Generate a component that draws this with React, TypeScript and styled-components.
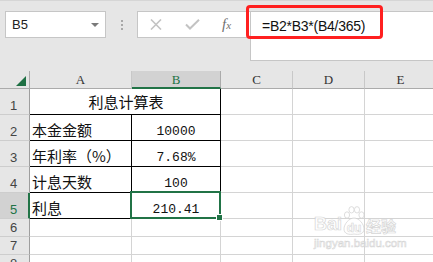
import React from 'react';
import styled, { createGlobalStyle } from 'styled-components';

const GREEN = '#217346';

const Global = createGlobalStyle`
  html, body { margin: 0; padding: 0; }
  body {
    width: 433px;
    height: 262px;
    overflow: hidden;
    background: #e6e6e6;
    font-family: "Liberation Sans", "Noto Sans CJK SC", sans-serif;
  }
`;

const Page = styled.div`
  position: relative;
  width: 433px;
  height: 262px;
  overflow: hidden;
  background: #e6e6e6;
`;

const TopBar = styled.div`
  box-sizing: border-box;
  height: 71px;
  border-top: 1px solid #d6d6d6;
  padding: 10px 0 0 5px;
  display: flex;
  align-items: flex-start;
`;

const NameBox = styled.div`
  box-sizing: border-box;
  width: 101px;
  height: 27px;
  background: #fff;
  border: 1px solid #c6c6c6;
  display: flex;
  align-items: center;
  justify-content: space-between;
  padding: 0 6px 0 6px;
  font-size: 13px;
  color: #222;
`;

const Arrow = styled.span`
  width: 0;
  height: 0;
  border-left: 4px solid transparent;
  border-right: 4px solid transparent;
  border-top: 4px solid #7a7a7a;
  margin-top: 1px;
`;

const Sep = styled.div`
  width: 31px;
  display: flex;
  flex-direction: column;
  align-items: center;
  gap: 2px;
  padding-top: 9px;
`;

const Dot = styled.span`
  width: 2px;
  height: 2px;
  background: #a8a8a8;
`;

const FormulaArea = styled.div`
  flex: 1;
  display: flex;
  align-items: flex-start;
`;

const ButtonsBox = styled.div`
  box-sizing: border-box;
  width: 113px;
  height: 27px;
  background: #fff;
  border: 1px solid #c6c6c6;
  border-right: none;
  display: flex;
  align-items: center;
  padding-left: 12px;
`;

const IconSlot = styled.span<{ $ml: number }>`
  display: flex;
  align-items: center;
  margin-left: ${(p) => p.$ml}px;
`;

const Fx = styled.span`
  font-family: "Liberation Serif", serif;
  font-style: italic;
  font-size: 15px;
  color: #707070;
  line-height: 1;
  margin-top: -1px;
  & > small {
    font-size: 11px;
  }
`;

const FormulaInput = styled.div`
  box-sizing: border-box;
  flex: 1;
  height: 50px;
  background: #fff;
  border: 1px solid #c6c6c6;
  margin-right: -2px;
  padding: 6px 0 0 11px;
  font-size: 14px;
  line-height: 16px;
  letter-spacing: -0.25px;
  color: #111;
`;

const RedBox = styled.div`
  position: absolute;
  left: 246px;
  top: 5px;
  width: 137px;
  height: 34px;
  box-sizing: border-box;
  border: 3px solid #ff2020;
  border-radius: 4px;
`;

const Sheet = styled.div`
  display: grid;
  grid-template-columns: 30px 102px 89px 72px 72px 72px;
  grid-template-rows: 18px 26px 26px 26px 26px 26px 18px 18px 18px;
`;

const Corner = styled.div`
  box-sizing: border-box;
  border-right: 1px solid #ababab;
  border-bottom: 1px solid #ababab;
  display: flex;
  justify-content: flex-end;
  align-items: flex-end;
  padding: 0 3px 2px 0;
`;

const ColHeader = styled.div<{ $sel?: boolean }>`
  box-sizing: border-box;
  background: ${(p) => (p.$sel ? '#d2d2d2' : '#e6e6e6')};
  border-right: 1px solid ${(p) => (p.$sel ? '#ababab' : '#c8c8c8')};
  border-bottom: ${(p) => (p.$sel ? `2px solid ${GREEN}` : '1px solid #ababab')};
  display: flex;
  justify-content: center;
  align-items: flex-end;
  padding-bottom: ${(p) => (p.$sel ? 1 : 2)}px;
  font-family: "Liberation Serif", serif;
  font-size: 13px;
  line-height: 12px;
  color: ${(p) => (p.$sel ? GREEN : '#333')};
`;

const RowHeader = styled.div<{ $sel?: boolean }>`
  box-sizing: border-box;
  background: ${(p) => (p.$sel ? '#d2d2d2' : '#e6e6e6')};
  border-right: ${(p) => (p.$sel ? `2px solid ${GREEN}` : '1px solid #9e9e9e')};
  border-bottom: 1px solid #cdcdcd;
  display: flex;
  justify-content: center;
  align-items: flex-end;
  padding: 0 ${(p) => (p.$sel ? 1 : 2)}px 2px 0;
  font-size: 13px;
  line-height: 13px;
  color: ${(p) => (p.$sel ? GREEN : '#444')};
`;

const Cell = styled.div<{ $table?: boolean; $span?: number; $align?: 'left' | 'center'; $v?: 'center' | 'bottom' }>`
  position: relative;
  box-sizing: border-box;
  background: #fff;
  grid-column: span ${(p) => p.$span ?? 1};
  border-right: 1px solid ${(p) => (p.$table ? '#000' : '#d4d4d4')};
  border-bottom: 1px solid ${(p) => (p.$table ? '#000' : '#d4d4d4')};
  display: flex;
  justify-content: ${(p) => (p.$align === 'center' ? 'center' : 'flex-start')};
  align-items: ${(p) => (p.$v === 'center' ? 'center' : 'flex-end')};
  padding: 0 0 ${(p) => (p.$v === 'center' ? 0 : 2)}px 2px;
`;

const CnText = styled.span`
  font-family: "Noto Sans CJK SC", sans-serif;
  font-size: 15px;
  line-height: 15px;
  color: #111;
  margin-bottom: 1px;
  white-space: nowrap;
`;

const NumText = styled.span`
  font-family: "Liberation Mono", monospace;
  font-size: 13px;
  line-height: 13px;
  color: #111;
  margin-right: 2px;
`;

const Selection = styled.div`
  position: absolute;
  top: -2px;
  left: -2px;
  right: -1px;
  bottom: -1px;
  border: 2px solid ${GREEN};
  z-index: 2;
  pointer-events: none;
`;

const Handle = styled.span`
  position: absolute;
  right: -4px;
  bottom: -4px;
  width: 7px;
  height: 7px;
  box-sizing: border-box;
  background: ${GREEN};
  border: 1px solid #fff;
`;

const Watermark = styled.div`
  position: absolute;
  left: 314px;
  top: 206px;
  display: flex;
  flex-direction: column;
  align-items: flex-start;
  opacity: 0.85;
  pointer-events: none;
`;

const WmTop = styled.div`
  display: flex;
  align-items: flex-end;
  color: #fff;
  -webkit-text-stroke: 0.7px #cfcfcf;
  font-weight: bold;
`;

const WmBai = styled.span`
  font-family: "Liberation Sans", sans-serif;
  font-size: 18px;
  line-height: 18px;
  margin-bottom: 4px;
`;

const WmJy = styled.span`
  font-family: "Noto Sans CJK SC", sans-serif;
  font-size: 15px;
  line-height: 17px;
  margin-bottom: 3px;
`;

const WmUrl = styled.span`
  font-family: "Liberation Sans", sans-serif;
  font-size: 11.5px;
  line-height: 12px;
  color: #fff;
  -webkit-text-stroke: 0.6px #d0d0d0;
  margin-top: 0px;
`;

const Triangle = () => (
  <svg width="10" height="10" viewBox="0 0 10 10">
    <polygon points="10,0 10,10 0,10" fill="#1f7044" />
  </svg>
);

const Cross = () => (
  <svg width="12" height="11" viewBox="0 0 12 11">
    <path d="M1 0.5 L11 10.5 M11 0.5 L1 10.5" stroke="#c3c3c3" strokeWidth="1.6" fill="none" />
  </svg>
);

const Check = () => (
  <svg width="15" height="11" viewBox="0 0 15 11">
    <path d="M1 5.5 L5 9.5 L14 0.8" stroke="#c3c3c3" strokeWidth="2" fill="none" />
  </svg>
);

const Paw = () => (
  <svg width="24" height="31" viewBox="0 0 24 31">
    <g fill="#fff" stroke="#cfcfcf" strokeWidth="0.8">
      <ellipse cx="5" cy="9" rx="2.6" ry="3.2" />
      <ellipse cx="9.5" cy="3.8" rx="2.6" ry="3.2" />
      <ellipse cx="15" cy="3.8" rx="2.6" ry="3.2" />
      <ellipse cx="19.5" cy="9" rx="2.6" ry="3.2" />
      <path d="M12 12 C17 12 22 18 22 23 C22 28 17 29 12 28 C7 29 2 28 2 23 C2 18 7 12 12 12 Z" />
    </g>
    <text x="12" y="26" textAnchor="middle" fontFamily="Liberation Sans, sans-serif" fontWeight="bold" fontSize="12" fill="#fff" stroke="#cfcfcf" strokeWidth="0.6">du</text>
  </svg>
);

type Row = { h: string; a?: string; b?: string; title?: string };

const rows: Row[] = [
  { h: '1', title: '利息计算表' },
  { h: '2', a: '本金金额', b: '10000' },
  { h: '3', a: '年利率（%）', b: '7.68%' },
  { h: '4', a: '计息天数', b: '100' },
  { h: '5', a: '利息', b: '210.41' },
];

const emptyRows = ['6', '7', '8'];

export default function App() {
  return (
    <Page>
      <Global />
      <TopBar>
        <NameBox>
          <span>B5</span>
          <Arrow />
        </NameBox>
        <Sep>
          <Dot />
          <Dot />
          <Dot />
        </Sep>
        <FormulaArea>
          <ButtonsBox>
            <IconSlot $ml={0}>
              <Cross />
            </IconSlot>
            <IconSlot $ml={23}>
              <Check />
            </IconSlot>
            <IconSlot $ml={22}>
              <Fx>
                f<small>x</small>
              </Fx>
            </IconSlot>
          </ButtonsBox>
          <FormulaInput>=B2*B3*(B4/365)</FormulaInput>
        </FormulaArea>
      </TopBar>
      <RedBox />
      <Sheet>
        <Corner>
          <Triangle />
        </Corner>
        <ColHeader>A</ColHeader>
        <ColHeader $sel>B</ColHeader>
        <ColHeader>C</ColHeader>
        <ColHeader>D</ColHeader>
        <ColHeader>E</ColHeader>
        {rows.map((r) => (
          <React.Fragment key={r.h}>
            <RowHeader $sel={r.h === '5'}>{r.h}</RowHeader>
            {r.title ? (
              <Cell $table $span={2} $align="center" $v="center">
                <CnText>{r.title}</CnText>
              </Cell>
            ) : (
              <>
                <Cell $table>
                  <CnText>{r.a}</CnText>
                </Cell>
                <Cell $table $align="center">
                  <NumText>{r.b}</NumText>
                  {r.h === '5' && (
                    <Selection>
                      <Handle />
                    </Selection>
                  )}
                </Cell>
              </>
            )}
            <Cell />
            <Cell />
            <Cell />
          </React.Fragment>
        ))}
        {emptyRows.map((h) => (
          <React.Fragment key={h}>
            <RowHeader>{h}</RowHeader>
            <Cell />
            <Cell />
            <Cell />
            <Cell />
            <Cell />
          </React.Fragment>
        ))}
      </Sheet>
      <Watermark>
        <WmTop>
          <WmBai>Bai</WmBai>
          <Paw />
          <WmJy>经验</WmJy>
        </WmTop>
        <WmUrl>jingyan.baidu.com</WmUrl>
      </Watermark>
    </Page>
  );
}
